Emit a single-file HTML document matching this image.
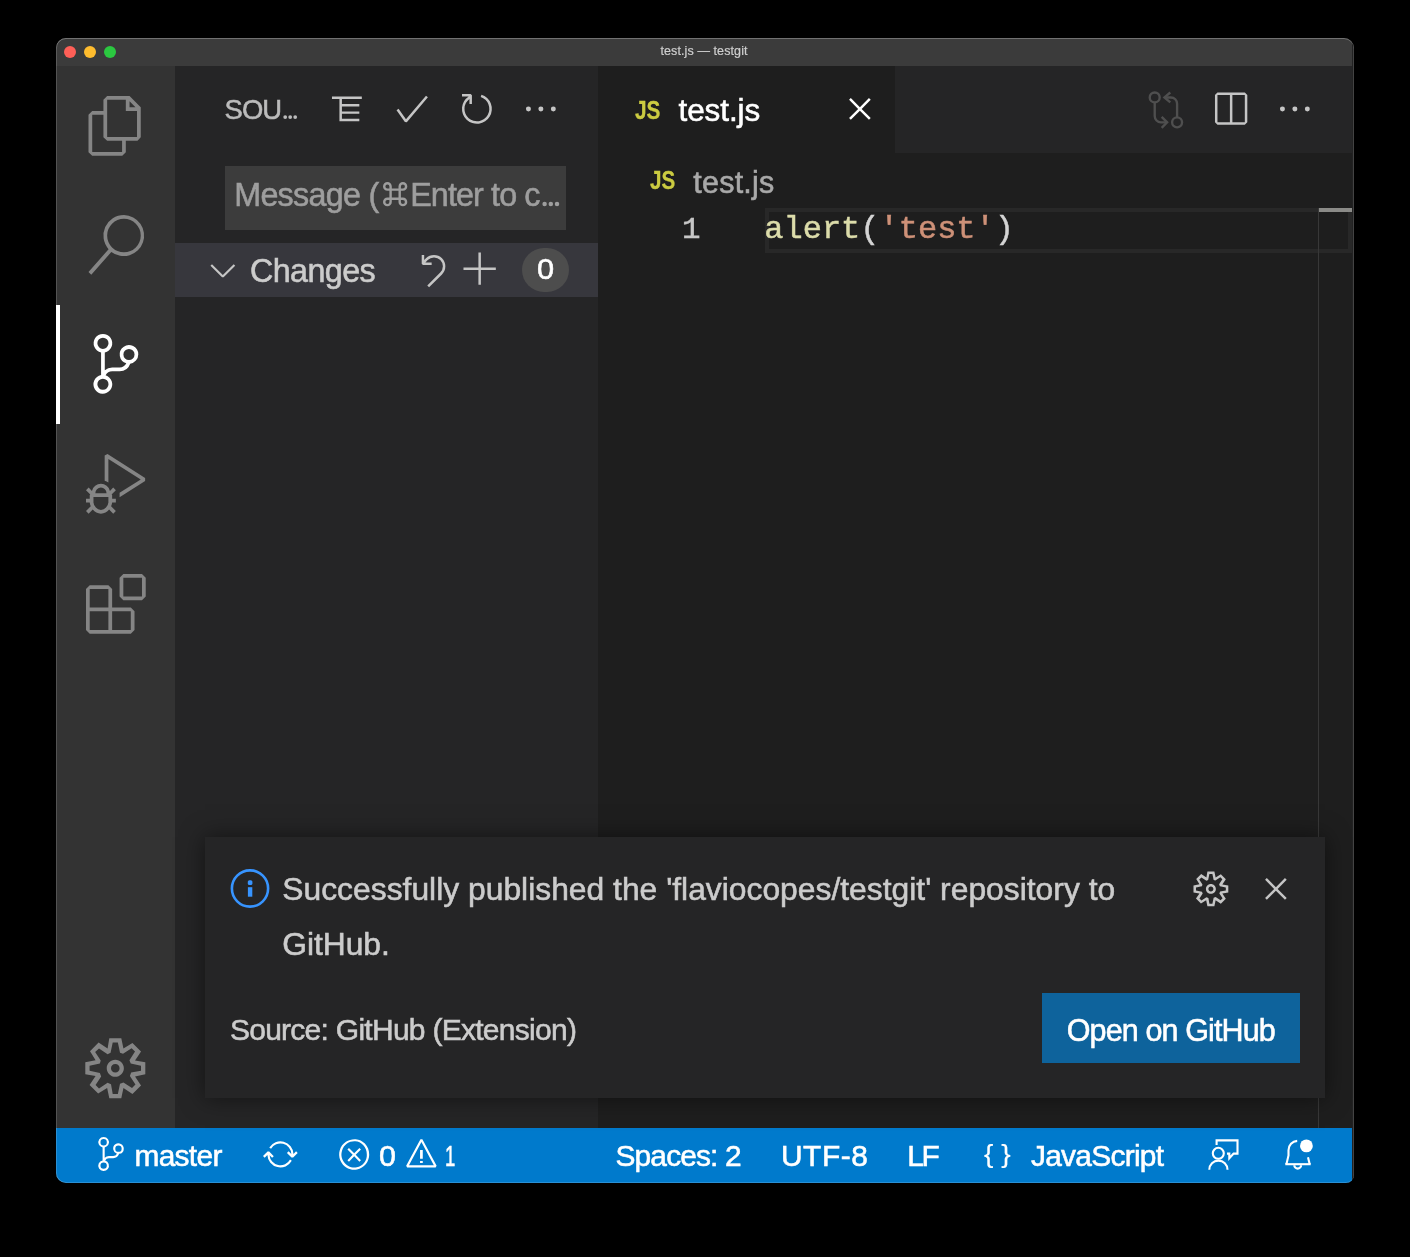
<!DOCTYPE html>
<html>
<head>
<meta charset="utf-8">
<title>test.js — testgit</title>
<style>
*{box-sizing:border-box;margin:0;padding:0}
html,body{width:1410px;height:1257px;background:#000;overflow:hidden}
body{font-family:"Liberation Sans",sans-serif;color:#ccc;position:relative}
#win{will-change:transform;position:absolute;left:0;top:0;width:1410px;height:1257px;clip-path:inset(38px 56px 74px 56px round 10px 10px 8px 10px)}
.abs{position:absolute}
.t{-webkit-text-stroke:0.55px currentColor;position:absolute;white-space:nowrap;line-height:1;transform-origin:0 0}
svg{position:absolute;overflow:visible}
</style>
</head>
<body>
<div id="win">

<div class="abs" style="left:56px;top:38px;width:1296px;height:28px;background:#3b3b3b"></div>
<div class="abs" style="left:56px;top:66px;width:119.4px;height:1062.3px;background:#333333"></div>
<div class="abs" style="left:175.4px;top:66px;width:422.9px;height:1062.3px;background:#252526"></div>
<div class="abs" style="left:598.3px;top:66px;width:753.7px;height:1062.3px;background:#1e1e1e"></div>
<div class="abs" style="left:56px;top:1128.3px;width:1296px;height:54.7px;background:#007acc"></div>


<div class="abs" style="left:1352px;top:38px;width:1px;height:1145px;background:#222"></div>
<div class="abs" style="left:1353px;top:38px;width:1px;height:1145px;background:#444"></div>
<div class="abs" style="left:64px;top:46px;width:12px;height:12px;border-radius:50%;background:#fe5f57"></div>
<div class="abs" style="left:84px;top:46px;width:12px;height:12px;border-radius:50%;background:#febc2e"></div>
<div class="abs" style="left:104px;top:46px;width:12px;height:12px;border-radius:50%;background:#2bc840"></div>
<div class="t" id="ttl" style="left:660.50px;top:45.32px;font-size:12.50px;color:#cfcfcf;-webkit-text-stroke:0.2px currentColor;letter-spacing:0.096px">test.js — testgit</div>


<svg style="left:85.84px;top:95.86px" width="59.72" height="59.72" viewBox="0 0 24 24" fill="#858585"><path fill-rule="evenodd" d="M17.5 0h-9L7 1.5V6H2.5L1 7.5v15.07L2.5 24h12.07L16 22.57V18h4.7l1.3-1.43V4.5L17.5 0zm0 2.12l2.38 2.38H17.5V2.12zm-3 20.38h-12v-15H7v9.07L8.5 18h6v4.5zm6-6h-12v-15H16V6h4.5v10.5z"/></svg>
<svg style="left:85.84px;top:215.30px" width="59.72" height="59.72" viewBox="0 0 24 24" fill="#858585"><path fill-rule="evenodd" d="M15.25 0a8.25 8.25 0 0 0-6.18 13.72L1 22.88l1.12 1.12 8.05-9.12A8.251 8.251 0 1 0 15.25.01V0zm0 15a6.75 6.75 0 1 1 0-13.5 6.75 6.75 0 0 1 0 13.5z"/></svg>
<div class="abs" style="left:56px;top:304.9px;width:4px;height:119.4px;background:#fff"></div>
<svg style="left:85.54px;top:334.04px" width="59.72" height="59.72" viewBox="0 0 24 24" fill="#fff"><path fill-rule="evenodd" d="M21.007 8.222A3.738 3.738 0 0 0 15.045 5.2a3.737 3.737 0 0 0 1.156 6.583 2.988 2.988 0 0 1-2.668 1.67h-2.99a4.456 4.456 0 0 0-2.989 1.165V7.4a3.737 3.737 0 1 0-1.494 0v9.117a3.776 3.776 0 1 0 1.816.099 2.99 2.99 0 0 1 2.668-1.667h2.99a4.484 4.484 0 0 0 4.223-3.039 3.736 3.736 0 0 0 3.25-3.687zM4.565 3.738a2.242 2.242 0 1 1 4.484 0 2.242 2.242 0 0 1-4.484 0zm4.484 16.441a2.242 2.242 0 1 1-4.484 0 2.242 2.242 0 0 1 4.484 0zm8.221-9.715a2.242 2.242 0 1 1 0-4.485 2.242 2.242 0 0 1 0 4.485z"/></svg>
<svg style="left:85.84px;top:454.18px" width="59.72" height="59.72" viewBox="0 0 24 24" fill="#858585"><path fill-rule="evenodd" d="M10.94 13.5l-1.32 1.32a3.73 3.73 0 0 0-7.24 0L1.06 13.5 0 14.56l1.72 1.72-.22.22V18H0v1.5h1.5v.08c.077.489.214.966.41 1.42L0 22.94 1.06 24l1.65-1.65A4.308 4.308 0 0 0 6 24a4.31 4.31 0 0 0 3.29-1.65L10.94 24 12 22.94 10.09 21c.198-.464.336-.951.41-1.45v-.1H12V18h-1.5v-1.5l-.22-.22L12 14.56l-1.06-1.06zM6 13.5a2.25 2.25 0 0 1 2.25 2.25h-4.5A2.25 2.25 0 0 1 6 13.5zm3 6a3.33 3.33 0 0 1-3 3 3.33 3.33 0 0 1-3-3v-2.250h6v2.250zm14.760-9.900v1.260L13.500 17.370V15.600l8.500-5.370L9 2v9.460a5.070 5.070 0 0 0-1.500-.720V.630L8.640 0l15.120 9.600z"/></svg>
<svg style="left:85.84px;top:573.62px" width="59.72" height="59.72" viewBox="0 0 24 24" fill="#858585"><path fill-rule="evenodd" d="M13.5 1.5L15 0h7.5L24 1.5V9l-1.5 1.5H15L13.5 9V1.5zm1.5 0V9h7.5V1.5H15zM0 15V6l1.5-1.5H9L10.5 6v7.5H18l1.5 1.5v7.5L18 24H1.5L0 22.500V15zm9-1.500V6H1.500v7.500H9zM9 15H1.500v7.500H9V15zm1.500 7.500H18V15h-7.500v7.500z"/></svg>
<svg style="left:81.35px;top:1033.70px" width="68.60" height="68.60" viewBox="0 0 16 16" fill="#858585"><path fill-rule="evenodd" d="M9.1 4.4L8.6 2H7.4l-.5 2.4-.7.3-2-1.3-.9.8 1.3 2-.2.7-2.4.5v1.200l2.400.5.300.8-1.300 2 .8.8 2-1.300.8.300.4 2.300h1.200l.5-2.400.8-.300 2 1.300.8-.8-1.300-2 .300-.8 2.300-.4V7.400l-2.400-.5-.300-.8 1.300-2-.8-.8-2 1.300-.7-.2zM9.400 1l.5 2.400L12 2.100l2 2-1.400 2.100 2.400.4v2.800l-2.400.5L14 12l-2 2-2.100-1.400-.5 2.400H6.600l-.5-2.400L4 13.900l-2-2 1.400-2.100L1 9.400V6.600l2.400-.5L2.100 4l2-2 2.100 1.400.4-2.400h2.800zm.6 7c0 1.100-.9 2-2 2s-2-.9-2-2 .9-2 2-2 2 .9 2 2zM8 9c.6 0 1-.4 1-1s-.4-1-1-1-1 .4-1 1 .4 1 1 1z"/></svg>


<div class="t" id="sou" style="left:224.60px;top:95.81px;font-size:27.40px;color:#bbbbbb;letter-spacing:-0.987px">SOU</div>
<svg style="left:0;top:0" width="1410" height="1257"><g fill="#bbbbbb"><circle cx="285.2" cy="117.1" r="1.9"/><circle cx="290.2" cy="117.1" r="1.9"/><circle cx="295.2" cy="117.1" r="1.9"/></g></svg>
<svg style="left:327.09px;top:89.09px" width="39.81" height="39.81" viewBox="0 0 16 16" fill="#c5c5c5"><path fill-rule="evenodd" d="M2 3h12v1H2zM5 4h1v9H5zM6 6h7v1H6zM6 9h7v1H6zM6 12h7v1H6z"/></svg>
<svg style="left:392.39px;top:89.09px" width="39.81" height="39.81" viewBox="0 0 16 16" fill="#c5c5c5"><path fill-rule="evenodd" d="M14.431 3.323l-8.470 10-.790-.036-3.350-4.770.818-.574 2.978 4.240 8.051-9.506.764.646z"/></svg>
<svg style="left:456.89px;top:89.09px" width="39.81" height="39.81" viewBox="0 0 16 16" fill="#c5c5c5"><path fill-rule="evenodd" d="M4.681 3H2V2h3.500l.5.5V6H5V4a5 5 0 1 0 4.530-.761l.302-.954A6 6 0 1 1 4.681 3z"/></svg>
<svg style="left:521.09px;top:89.09px" width="39.81" height="39.81" viewBox="0 0 16 16" fill="#c5c5c5"><path fill-rule="evenodd" d="M4 8a1 1 0 1 1-2 0 1 1 0 0 1 2 0zm5 0a1 1 0 1 1-2 0 1 1 0 0 1 2 0zm5 0a1 1 0 1 1-2 0 1 1 0 0 1 2 0z"/></svg>
<div class="abs" style="left:225px;top:166.3px;width:341px;height:63.5px;background:#3c3c3c"></div>
<div class="t" id="msg" style="left:234.20px;top:178.76px;font-size:32.30px;color:#9e9e9e;letter-spacing:-0.715px">Message (</div>
<div class="t" id="msg2" style="left:410.20px;top:178.76px;font-size:32.30px;color:#9e9e9e;letter-spacing:-0.886px">Enter to c</div>
<svg style="left:383.1px;top:182.2px" width="24.3" height="24.3" viewBox="0 0 24.3 24.3"><path d="M7.6 7.6H4.4A3.2 3.2 0 1 1 7.6 4.4V19.9A3.2 3.2 0 1 1 4.4 16.7H19.9A3.2 3.2 0 1 1 16.7 19.9V4.4A3.2 3.2 0 1 1 19.9 7.6Z" fill="none" stroke="#9e9e9e" stroke-width="2.4"/></svg>
<svg style="left:0;top:0" width="1410" height="1257"><g fill="#9e9e9e"><circle cx="544.6" cy="203.9" r="2.25"/><circle cx="550.8" cy="203.9" r="2.25"/><circle cx="557" cy="203.9" r="2.25"/></g></svg>
<div class="abs" style="left:175.4px;top:242.6px;width:422.9px;height:54.7px;background:#37373d"></div>
<svg style="left:202.79px;top:249.99px" width="39.81" height="39.81" viewBox="0 0 16 16" fill="#c5c5c5"><path fill-rule="evenodd" d="M7.976 10.072l4.357-4.357.62.618L8.284 11h-.618L3 6.333l.619-.618 4.357 4.357z"/></svg>
<div class="t" id="chg" style="left:250.00px;top:254.66px;font-size:32.30px;color:#cccccc;letter-spacing:-0.606px">Changes</div>
<svg style="left:412.69px;top:249.99px" width="39.81" height="39.81" viewBox="0 0 16 16" fill="#c5c5c5"><path fill-rule="evenodd" d="M3.5 2v3.500L4 6h3.500V5H4.979l.941-.941a3.552 3.552 0 1 1 5.023 5.023L5.746 14.279l.720.720 5.198-5.198A4.570 4.570 0 0 0 5.200 3.339l-.7.7V2h-1z"/></svg>
<svg style="left:461.49px;top:250.19px" width="39.81" height="39.81" viewBox="0 0 16 16" fill="#c5c5c5"><path fill-rule="evenodd" d="M14 7v1H8v6H7V8H1V7h6V1h1v6h6z"/></svg>
<div class="abs" style="left:522px;top:248px;width:47px;height:44px;border-radius:22px;background:#4d4d4d"></div>
<div class="t" id="bdg" style="left:536.57px;top:253.50px;font-size:30.00px;color:#ffffff;transform:scaleX(1.0267)">0</div>


<div class="abs" style="left:598.3px;top:66px;width:753.7px;height:87px;background:#252526"></div>
<div class="abs" style="left:598.3px;top:66px;width:296.7px;height:87px;background:#1e1e1e"></div>
<div class="t" id="js1" style="left:634.90px;top:98.41px;font-size:25.50px;color:#cbcb41;font-weight:700;-webkit-text-stroke:0.3px currentColor;transform:scaleX(0.8146)">JS</div>
<div class="t" id="tab" style="left:678.60px;top:94.74px;font-size:31.50px;color:#ffffff;letter-spacing:-0.120px">test.js</div>
<svg style="left:839.79px;top:88.69px" width="39.81" height="39.81" viewBox="0 0 16 16" fill="#ffffff"><path fill-rule="evenodd" d="M8 8.707l3.646 3.647.708-.707L8.707 8l3.647-3.646-.707-.708L8 7.293 4.354 3.646l-.707.708L7.293 8l-3.646 3.646.707.708L8 8.707z"/></svg>
<svg style="left:1146.09px;top:90.29px" width="39.81" height="39.81" viewBox="0 0 16 16"><g fill="none" stroke="#4f4f4f" stroke-width="0.95"><circle cx="3.5" cy="3" r="2"/><circle cx="12.5" cy="13" r="2"/><path d="M3.5 5V10.5a2.500 2.500 0 0 0 2.500 2.500H8.300"/><path d="M6.300 10.800L8.500 13L6.300 15.200"/><path d="M12.500 11V5.500a2.500 2.500 0 0 0-2.500-2.500H7.600"/><path d="M9.770 1L7.400 3L9.770 5"/></g></svg>
<svg style="left:1210.29px;top:89.69px" width="39.81" height="39.81" viewBox="0 0 16 16" fill="#c5c5c5"><path fill-rule="evenodd" d="M14 1H3L2 2v11l1 1h11l1-1V2l-1-1zM8 13H3V2h5v11zm6 0H9V2h5v11z"/></svg>
<svg style="left:1275.09px;top:89.09px" width="39.81" height="39.81" viewBox="0 0 16 16" fill="#c5c5c5"><path fill-rule="evenodd" d="M4 8a1 1 0 1 1-2 0 1 1 0 0 1 2 0zm5 0a1 1 0 1 1-2 0 1 1 0 0 1 2 0zm5 0a1 1 0 1 1-2 0 1 1 0 0 1 2 0z"/></svg>
<div class="t" id="js2" style="left:650.00px;top:168.11px;font-size:25.50px;color:#cbcb41;font-weight:700;-webkit-text-stroke:0.3px currentColor;transform:scaleX(0.8082)">JS</div>
<div class="t" id="bc" style="left:693.30px;top:166.68px;font-size:30.50px;color:#a9a9a9;letter-spacing:0.215px">test.js</div>
<div class="abs" style="left:765px;top:208px;width:587px;height:45px;border:4px solid #282828"></div>
<div class="t" id="ln" style="left:681.67px;top:215.97px;font-size:29.00px;color:#c6c6c6;font-family:'Liberation Mono',monospace;transform:scaleX(1.0643)">1</div>
<div class="t" id="code" style="left:764.3px;top:214.47px;font-size:32px;font-family:'Liberation Mono',monospace;-webkit-text-stroke:0.5px currentColor"><span style="color:#dcdcaa">alert</span><span style="color:#d4d4d4">(</span><span style="color:#ce9178">'test'</span><span style="color:#d4d4d4">)</span></div>
<div class="abs" style="left:1319px;top:208.2px;width:33.1px;height:3.9px;background:#8b8b88"></div>
<div class="abs" style="left:1318px;top:208.2px;width:1px;height:920px;background:#383838"></div>


<div class="abs" style="left:205px;top:836.8px;width:1119.6px;height:260.8px;background:#252526;box-shadow:0 0 22px rgba(0,0,0,.5)"></div>
<svg style="left:0;top:0" width="1410" height="1257"><circle cx="250" cy="888.5" r="18.1" fill="none" stroke="#3794ff" stroke-width="2.6"/><rect x="247.9" y="887.2" width="4.4" height="9.5" fill="#3794ff"/><rect x="247.8" y="880.2" width="4.6" height="4.9" rx="1.6" fill="#3794ff"/></svg>
<div class="t" id="n1" style="left:282.30px;top:874.08px;font-size:31.80px;color:#cccccc;letter-spacing:0.011px">Successfully published the 'flaviocopes/testgit' repository to</div>
<div class="t" id="n2" style="left:282.30px;top:928.78px;font-size:31.80px;color:#cccccc;letter-spacing:-0.060px">GitHub.</div>
<svg style="left:1190.69px;top:868.99px" width="39.81" height="39.81" viewBox="0 0 16 16" fill="#c5c5c5"><path fill-rule="evenodd" d="M9.1 4.4L8.6 2H7.4l-.5 2.4-.7.3-2-1.3-.9.8 1.3 2-.2.7-2.4.5v1.200l2.400.5.300.8-1.300 2 .8.8 2-1.300.8.300.4 2.300h1.200l.5-2.400.8-.300 2 1.300.8-.8-1.300-2 .300-.8 2.300-.4V7.400l-2.400-.5-.300-.8 1.300-2-.8-.8-2 1.300-.7-.2zM9.400 1l.5 2.400L12 2.100l2 2-1.400 2.100 2.400.4v2.800l-2.400.5L14 12l-2 2-2.100-1.400-.5 2.400H6.600l-.5-2.400L4 13.900l-2-2 1.400-2.100L1 9.400V6.600l2.400-.5L2.100 4l2-2 2.100 1.400.4-2.400h2.800zm.6 7c0 1.100-.9 2-2 2s-2-.9-2-2 .9-2 2-2 2 .9 2 2zM8 9c.6 0 1-.4 1-1s-.4-1-1-1-1 .4-1 1 .4 1 1 1z"/></svg>
<svg style="left:1255.99px;top:869.29px" width="39.81" height="39.81" viewBox="0 0 16 16" fill="#c5c5c5"><path fill-rule="evenodd" d="M8 8.707l3.646 3.647.708-.707L8.707 8l3.647-3.646-.707-.708L8 7.293 4.354 3.646l-.707.708L7.293 8l-3.646 3.646.707.708L8 8.707z"/></svg>
<div class="t" id="src" style="left:229.90px;top:1015.11px;font-size:30.00px;color:#cccccc;letter-spacing:-0.727px">Source: GitHub (Extension)</div>
<div class="abs" style="left:1042px;top:993px;width:258px;height:70px;background:#0e639c"></div>
<div class="t" id="btn" style="left:1066.70px;top:1014.98px;font-size:30.50px;color:#ffffff;letter-spacing:-0.873px">Open on GitHub</div>


<svg style="left:93.90px;top:1137.30px" width="34.00" height="34.00" viewBox="0 0 24 24"><path fill="#fff" d="M21.007 8.222A3.738 3.738 0 0 0 15.045 5.2a3.737 3.737 0 0 0 1.156 6.583 2.988 2.988 0 0 1-2.668 1.67h-2.99a4.456 4.456 0 0 0-2.989 1.165V7.4a3.737 3.737 0 1 0-1.494 0v9.117a3.776 3.776 0 1 0 1.816.099 2.99 2.99 0 0 1 2.668-1.667h2.99a4.484 4.484 0 0 0 4.223-3.039 3.736 3.736 0 0 0 3.25-3.687zM4.565 3.738a2.242 2.242 0 1 1 4.484 0 2.242 2.242 0 0 1-4.484 0zm4.484 16.441a2.242 2.242 0 1 1-4.484 0 2.242 2.242 0 0 1 4.484 0zm8.221-9.715a2.242 2.242 0 1 1 0-4.485 2.242 2.242 0 0 1 0 4.485z"/></svg>
<div class="t" id="mst" style="left:134.50px;top:1141.09px;font-size:29.90px;color:#ffffff;letter-spacing:-0.699px">master</div>
<svg style="left:262.88px;top:1137.38px" width="34.84" height="34.84" viewBox="0 0 16 16" fill="#ffffff"><path fill-rule="evenodd" d="M2.006 8.267L.780 9.500 0 8.730l2.090-2.070.760.010 2.090 2.120-.760.760-1.167-1.180a5 5 0 0 0 9.400 1.983l.813.597a6 6 0 0 1-11.220-2.683zm10.990-.466L11.760 6.550l-.760.760 2.090 2.110.760.010 2.090-2.070-.750-.760-1.194 1.180a6 6 0 0 0-11.110-2.920l.810.594a5 5 0 0 1 9.300 2.346z"/></svg>
<svg style="left:336.88px;top:1136.88px" width="34.84" height="34.84" viewBox="0 0 16 16" fill="#ffffff"><path fill-rule="evenodd" d="M8.600 1c1.600.1 3.100.9 4.200 2 1.300 1.400 2 3.100 2 5.100 0 1.600-.6 3.100-1.600 4.400-1 1.200-2.400 2.100-4 2.400-1.600.3-3.200.1-4.600-.7-1.400-.8-2.500-2-3.100-3.500C.900 9.200.800 7.500 1.300 6c.5-1.600 1.400-2.900 2.800-3.800C5.400 1.300 7 .900 8.600 1zm.5 12.900c1.300-.3 2.500-1 3.400-2.100.8-1.100 1.300-2.400 1.200-3.800 0-1.600-.6-3.200-1.700-4.300-1-1-2.200-1.600-3.600-1.700-1.300-.1-2.700.2-3.800 1-1.100.8-1.900 1.900-2.300 3.300-.4 1.300-.4 2.700.2 4 .6 1.300 1.500 2.300 2.700 3 1.200.7 2.600.9 3.900.6zM7.900 7.500L10.300 5l.7.7-2.400 2.500 2.400 2.500-.7.7-2.400-2.500-2.400 2.500-.7-.7 2.400-2.500-2.400-2.500.7-.7 2.400 2.500z"/></svg>
<div class="t" id="e0" style="left:379.38px;top:1141.09px;font-size:29.90px;color:#ffffff;transform:scaleX(1.0200)">0</div>
<svg style="left:403.58px;top:1136.88px" width="34.84" height="34.84" viewBox="0 0 16 16" fill="#ffffff"><path fill-rule="evenodd" d="M7.560 1h.880l6.540 12.260-.440.740H1.440L1 13.260 7.560 1zM8 2.280L2.280 13H13.700L8 2.280zM8.625 12v-1h-1.250v1h1.250zm-1.250-2V6h1.250v4h-1.250z"/></svg>
<div class="t" id="w1" style="left:445.46px;top:1141.09px;font-size:29.90px;color:#ffffff;transform:scaleX(0.6214)">1</div>
<div class="t" id="spc" style="left:615.50px;top:1140.99px;font-size:29.90px;color:#ffffff;letter-spacing:-0.851px">Spaces: 2</div>
<div class="t" id="utf" style="left:781.00px;top:1140.99px;font-size:29.90px;color:#ffffff;letter-spacing:0.536px">UTF-8</div>
<div class="t" id="lf" style="left:907.20px;top:1140.99px;font-size:29.90px;color:#ffffff;letter-spacing:-2.224px">LF</div>
<svg style="left:0;top:0" width="1410" height="1257" viewBox="0 0 1410 1257"><g fill="none" stroke="#fff" stroke-width="2.1">
<path d="M1216.600 1145V1140.400H1237.500V1153.600H1233.600L1229.300 1158.300V1153.600H1227"/>
<circle cx="1218.300" cy="1153.300" r="5.500"/>
<path d="M1209.300 1169.700a9.100 9.100 0 0 1 18.200 0"/>
<path d="M1285.300 1164.200H1310.700"/>
<path d="M1286.400 1164.200L1288.500 1155.500V1150.200A9.300 9.300 0 0 1 1297.200 1140.900"/>
<path d="M1308 1157.300L1309.700 1164.200"/>
<path d="M1294.300 1165.200a3.400 3.400 0 0 0 6.800 0"/>
</g><circle cx="1306.400" cy="1145.900" r="6.400" fill="#fff"/></svg>
<div class="t" id="brc" style="left:984.10px;top:1141.49px;font-size:26.00px;color:#ffffff;-webkit-text-stroke:0.15px currentColor;transform:scaleX(1.0800)">{ }</div>
<div class="t" id="jsl" style="left:1030.90px;top:1140.99px;font-size:29.90px;color:#ffffff;letter-spacing:-0.704px">JavaScript</div>

</div>

<div class="abs" style="left:56px;top:38px;width:1298px;height:1145px;border-radius:10px 10px 8px 10px;box-shadow:inset 0 1px 0 rgba(255,255,255,.28), inset 1px 0 0 rgba(255,255,255,.16), inset 0 -1px 0 rgba(255,255,255,.16);pointer-events:none"></div>

</body>
</html>
